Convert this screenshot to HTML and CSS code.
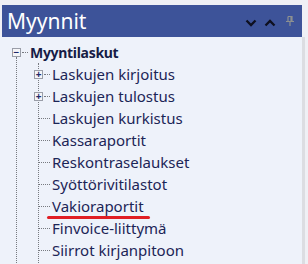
FILE: index.html
```html
<!DOCTYPE html>
<html lang="fi">
<head>
    <meta charset="UTF-8">
    <title>Myynnit</title>
    <link rel="stylesheet" href="styles.css">
</head>
<body>
    <div class="panel">
        <div class="head">
            <span class="title">Myynnit</span>
            <div class="tools">
                <svg width="12" height="8" viewBox="0 0 12 8"><path d="M1.5 1.5 L6 6 L10.5 1.5" fill="none" stroke="#0e1020" stroke-width="2.3"/></svg>
                <svg width="12" height="8" viewBox="0 0 12 8"><path d="M1.5 6.5 L6 2 L10.5 6.5" fill="none" stroke="#0e1020" stroke-width="2.3"/></svg>
                <svg class="pin" width="8" height="10" viewBox="0 0 8 10"><path d="M2 0.5 H6 V5 M2 0.5 V5 M0 5.5 H8 M4 5.5 V10 M5 0.5 V5" fill="none" stroke="#8d9090" stroke-width="1.2"/></svg>
            </div>
        </div>
        <div class="content">
            <div class="row root">
                <span class="box">−</span>
                <span class="twig short"></span>
                <span class="label bold">Myyntilaskut</span>
            </div>
            <div class="kids">
                <div class="kids-inner">
                    <div class="row"><span class="box">+</span><span class="twig short"></span><span class="label">Laskujen kirjoitus</span></div>
                    <div class="row"><span class="box">+</span><span class="twig short"></span><span class="label">Laskujen tulostus</span></div>
                    <div class="row"><span class="twig"></span><span class="label">Laskujen kurkistus</span></div>
                    <div class="row"><span class="twig"></span><span class="label">Kassaraportit</span></div>
                    <div class="row"><span class="twig"></span><span class="label">Reskontraselaukset</span></div>
                    <div class="row"><span class="twig"></span><span class="label">Syöttörivitilastot</span></div>
                    <div class="row"><span class="twig"></span><span class="label marked">Vakioraportit</span></div>
                    <div class="row"><span class="twig"></span><span class="label">Finvoice-liittymä</span></div>
                    <div class="row"><span class="twig"></span><span class="label">Siirrot kirjanpitoon</span></div>
                </div>
            </div>
        </div>
    </div>
</body>
</html>
```

FILE: styles.css
```css
body {
    margin: 0;
    background: #eff0f5;
    font-family: 'Noto Sans', 'Open Sans', sans-serif;
    height: 264px;
    overflow: hidden;
}
.panel {
    margin: 5px 0 0 2px;
    width: 303px;
}
.head {
    display: flex;
    align-items: center;
    height: 32px;
    background: #3d5399;
    padding: 0 8px 0 5px;
    margin-right: 3px;
}
.title {
    color: #fff;
    font-size: 21px;
    flex: 1;
    margin-top: -1px;
}
.tools {
    display: flex;
    align-items: center;
    gap: 7px;
}
.tools svg {
    margin-top: 4px;
}
.tools .pin {
    margin-left: 3px;
    margin-top: -1px;
}
.content {
    background: #eef2fa;
    border-right: 3px solid #dcdde2;
    margin-left: -2px;
    height: 240px;
    padding-top: 4px;
}
.row {
    display: flex;
    align-items: center;
    height: 22px;
    color: #1c2557;
    font-size: 15px;
    white-space: nowrap;
}
.root {
    padding-left: 12px;
}
.box {
    width: 7px;
    height: 7px;
    border: 1px solid #9a9ea8;
    background: #f4f5f8;
    color: #1d2a6a;
    font-size: 10px;
    font-weight: bold;
    line-height: 6px;
    text-align: center;
    margin-left: -5px;
    position: relative;
    z-index: 1;
}
.root .box {
    margin-left: 0;
}
.twig {
    width: 11px;
    border-top: 1px dotted #777a80;
    margin-right: 2px;
}
.twig.short {
    width: 6px;
    margin-left: 1px;
}
.label.bold {
    font-weight: bold;
    font-size: 14px;
    letter-spacing: -0.3px;
    color: #161c46;
}
.marked {
    position: relative;
}
.marked::after {
    content: "";
    position: absolute;
    left: -5px;
    right: -6px;
    bottom: -3px;
    height: 3px;
    border-radius: 2px;
    background: #e01e24;
}
.kids {
    margin-left: 16px;
    border-left: 1px dotted #777a80;
    margin-top: -6px;
    padding-top: 6px;
}
.kids-inner {
    margin-left: 21px;
    border-left: 1px dotted #777a80;
    padding-bottom: 30px;
}
```
